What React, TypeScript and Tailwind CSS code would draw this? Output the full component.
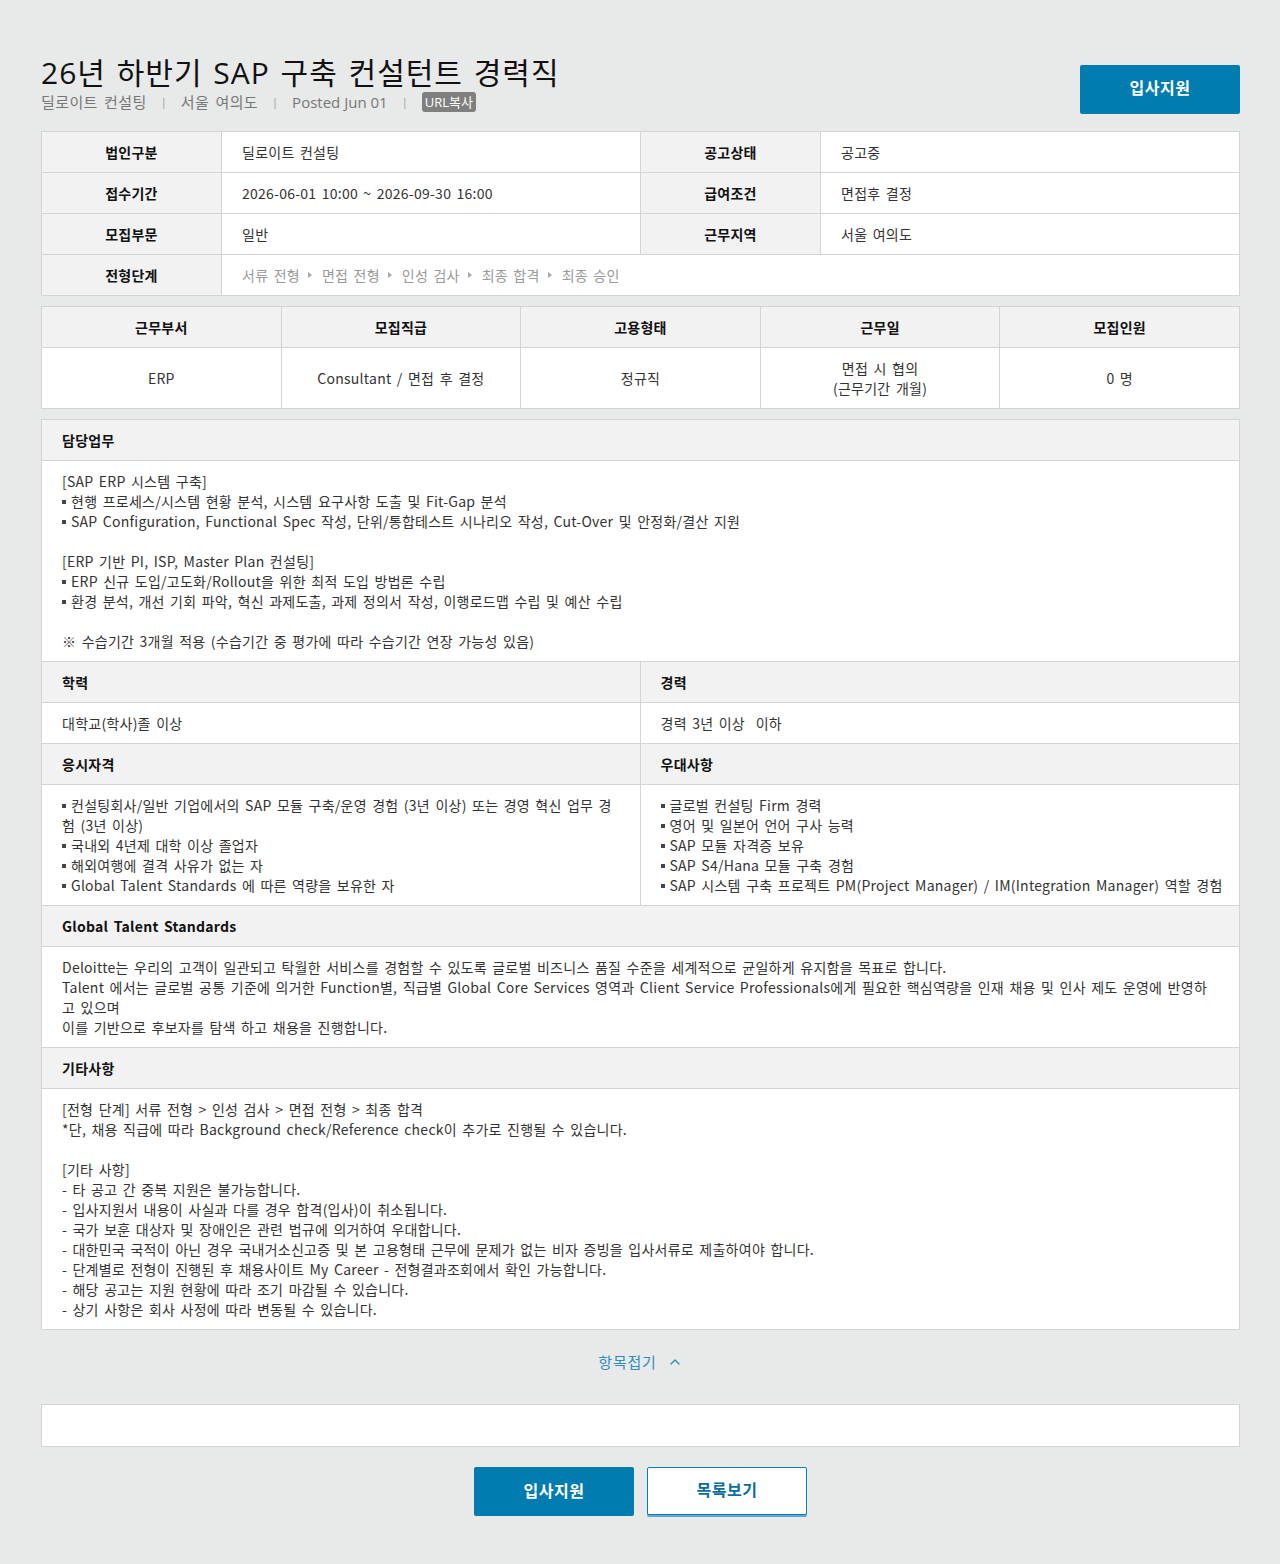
import React from 'react'
import { ChevronUp } from 'lucide-react'

const kr = "font-['Noto_Sans_CJK_KR','Noto_Sans',sans-serif]"
const head = "font-['Open_Sans','Noto_Sans_CJK_KR',sans-serif]"
const spread = 'tracking-[0.25px] [word-spacing:2px]'

const steps = ['서류 전형', '면접 전형', '인성 검사', '최종 합격', '최종 승인']

const duties = [
  '[SAP ERP 시스템 구축]',
  '• 현행 프로세스/시스템 현황 분석, 시스템 요구사항 도출 및 Fit-Gap 분석',
  '• SAP Configuration, Functional Spec 작성, 단위/통합테스트 시나리오 작성, Cut-Over 및 안정화/결산 지원',
  '',
  '[ERP 기반 PI, ISP, Master Plan 컨설팅]',
  '• ERP 신규 도입/고도화/Rollout을 위한 최적 도입 방법론 수립',
  '• 환경 분석, 개선 기회 파악, 혁신 과제도출, 과제 정의서 작성, 이행로드맵 수립 및 예산 수립',
  '',
  '※ 수습기간 3개월 적용 (수습기간 중 평가에 따라 수습기간 연장 가능성 있음)',
]

const qualifications = [
  '• 컨설팅회사/일반 기업에서의 SAP 모듈 구축/운영 경험 (3년 이상) 또는 경영 혁신 업무 경',
  '험 (3년 이상)',
  '• 국내외 4년제 대학 이상 졸업자',
  '• 해외여행에 결격 사유가 없는 자',
  '• Global Talent Standards 에 따른 역량을 보유한 자',
]

const preferred = [
  '• 글로벌 컨설팅 Firm 경력',
  '• 영어 및 일본어 언어 구사 능력',
  '• SAP 모듈 자격증 보유',
  '• SAP S4/Hana 모듈 구축 경험',
  '• SAP 시스템 구축 프로젝트 PM(Project Manager) / IM(Integration Manager) 역할 경험',
]

const standards = [
  'Deloitte는 우리의 고객이 일관되고 탁월한 서비스를 경험할 수 있도록 글로벌 비즈니스 품질 수준을 세계적으로 균일하게 유지함을 목표로 합니다.',
  'Talent 에서는 글로벌 공통 기준에 의거한 Function별, 직급별 Global Core Services 영역과 Client Service Professionals에게 필요한 핵심역량을 인재 채용 및 인사 제도 운영에 반영하',
  '고 있으며',
  '이를 기반으로 후보자를 탐색 하고 채용을 진행합니다.',
]

const etc = [
  '[전형 단계] 서류 전형 > 인성 검사 > 면접 전형 > 최종 합격',
  '*단, 채용 직급에 따라 Background check/Reference check이 추가로 진행될 수 있습니다.',
  '',
  '[기타 사항]',
  '- 타 공고 간 중복 지원은 불가능합니다.',
  '- 입사지원서 내용이 사실과 다를 경우 합격(입사)이 취소됩니다.',
  '- 국가 보훈 대상자 및 장애인은 관련 법규에 의거하여 우대합니다.',
  '- 대한민국 국적이 아닌 경우 국내거소신고증 및 본 고용형태 근무에 문제가 없는 비자 증빙을 입사서류로 제출하여야 합니다.',
  '- 단계별로 전형이 진행된 후 채용사이트 My Career - 전형결과조회에서 확인 가능합니다.',
  '- 해당 공고는 지원 현황에 따라 조기 마감될 수 있습니다.',
  '- 상기 사항은 회사 사정에 따라 변동될 수 있습니다.',
]

function Lines({ lines }: { lines: string[] }) {
  return (
    <div className={`px-5 py-[10px] text-sm leading-5 text-[#333] ${spread}`}>
      {lines.map((l, i) => (
        <div key={i} className="whitespace-pre">
          {l.startsWith('• ') ? (
            <>
              <span className="inline-block w-[4px] h-[4px] mr-[5px] bg-[#444] align-middle -translate-y-[1px]" />
              {l.slice(2)}
            </>
          ) : (
            l || '\u00a0'
          )}
        </div>
      ))}
    </div>
  )
}

function SectionHead({ children }: { children: React.ReactNode }) {
  return (
    <div className={`h-[41px] flex items-center px-5 bg-[#f2f2f2] border-b border-[#d4d4d4] text-sm font-bold text-[#111] ${spread}`}>
      {children}
    </div>
  )
}

function Label({ children }: { children: React.ReactNode }) {
  return (
    <td className={`w-[180px] h-[41px] border border-[#d4d4d4] bg-[#f2f2f2] text-center text-sm font-bold text-[#111] ${spread}`}>
      {children}
    </td>
  )
}

function Value({ children, colSpan }: { children: React.ReactNode; colSpan?: number }) {
  return (
    <td colSpan={colSpan} className={`h-[41px] border border-[#d4d4d4] bg-white px-5 text-sm text-[#333] ${spread}`}>
      {children}
    </td>
  )
}

export default function App() {
  return (
    <div className={`min-h-[1564px] bg-[#e8e9e9] ${kr}`}>
      <div className="w-[1199px] ml-[41px] pt-[54px] pb-[49px]">
        {/* Title */}
        <div className="flex justify-between items-start">
          <div>
            <h1 className={`text-[30px] leading-[38px] text-[#111] tracking-[1px] [word-spacing:2px] ${head}`}>
              26년 하반기 SAP 구축 컨설턴트 경력직
            </h1>
            <div className={`flex items-center text-[15px] text-[#777] leading-5 ${head}`}>
              <span className="tracking-[0.4px] [word-spacing:2px]">딜로이트 컨설팅</span>
              <span className="mx-[14px] text-[11px] text-[#999]">|</span>
              <span className="tracking-[0.4px] [word-spacing:2px]">서울 여의도</span>
              <span className="mx-[14px] text-[11px] text-[#999]">|</span>
              <span>Posted Jun 01</span>
              <span className="mx-[14px] text-[11px] text-[#999]">|</span>
              <span className="rounded-[3px] bg-[#7f7f7f] px-[3px] text-[13px] leading-[20px] text-white">URL복사</span>
            </div>
          </div>
          <button className="mt-[11px] w-[160px] h-[49px] pb-[5px] rounded-[2px] bg-[#007cb0] text-white text-base font-bold tracking-[0.5px]">
            입사지원
          </button>
        </div>

        {/* Summary */}
        <table className="mt-[17px] w-full border-collapse table-fixed">
          <colgroup>
            <col className="w-[180px]" />
            <col />
            <col className="w-[180px]" />
            <col />
          </colgroup>
          <tbody>
            <tr>
              <Label>법인구분</Label>
              <Value>딜로이트 컨설팅</Value>
              <Label>공고상태</Label>
              <Value>공고중</Value>
            </tr>
            <tr>
              <Label>접수기간</Label>
              <Value>2026-06-01 10:00 ~ 2026-09-30 16:00</Value>
              <Label>급여조건</Label>
              <Value>면접후 결정</Value>
            </tr>
            <tr>
              <Label>모집부문</Label>
              <Value>일반</Value>
              <Label>근무지역</Label>
              <Value>서울 여의도</Value>
            </tr>
            <tr>
              <Label>전형단계</Label>
              <Value colSpan={3}>
                <div className="flex items-center text-[#999]">
                  {steps.map((s, i) => (
                    <React.Fragment key={s}>
                      <span>{s}</span>
                      {i < steps.length - 1 && (
                        <span className="ml-[8px] mr-[10px] w-0 h-0 border-l-[4px] border-l-[#aaa] border-y-[3px] border-y-transparent" />
                      )}
                    </React.Fragment>
                  ))}
                </div>
              </Value>
            </tr>
          </tbody>
        </table>

        {/* Position */}
        <table className={`mt-[10px] w-full border-collapse table-fixed text-sm ${spread}`}>
          <thead>
            <tr className="bg-[#f2f2f2] text-[#111]">
              {['근무부서', '모집직급', '고용형태', '근무일', '모집인원'].map(h => (
                <th key={h} className="h-[41px] border border-[#d4d4d4] font-bold">{h}</th>
              ))}
            </tr>
          </thead>
          <tbody>
            <tr className="bg-white text-center text-[#333] leading-5">
              <td className="h-[61px] border border-[#d4d4d4]">ERP</td>
              <td className="border border-[#d4d4d4]">Consultant / 면접 후 결정</td>
              <td className="border border-[#d4d4d4]">정규직</td>
              <td className="border border-[#d4d4d4]">
                면접 시 협의
                <br />
                (근무기간 개월)
              </td>
              <td className="border border-[#d4d4d4]">0 명</td>
            </tr>
          </tbody>
        </table>

        {/* Details */}
        <div className="mt-[10px] border border-[#d4d4d4] bg-white">
          <SectionHead>담당업무</SectionHead>
          <div className="border-b border-[#d4d4d4]">
            <Lines lines={duties} />
          </div>

          <div className="grid grid-cols-2 border-b border-[#d4d4d4]">
            <div className="border-r border-[#d4d4d4]">
              <SectionHead>학력</SectionHead>
              <Lines lines={['대학교(학사)졸 이상']} />
            </div>
            <div>
              <SectionHead>경력</SectionHead>
              <Lines lines={['경력 3년 이상  이하']} />
            </div>
          </div>

          <div className="grid grid-cols-2 border-b border-[#d4d4d4]">
            <div className="border-r border-[#d4d4d4]">
              <SectionHead>응시자격</SectionHead>
              <Lines lines={qualifications} />
            </div>
            <div>
              <SectionHead>우대사항</SectionHead>
              <Lines lines={preferred} />
            </div>
          </div>

          <SectionHead>Global Talent Standards</SectionHead>
          <div className="border-b border-[#d4d4d4]">
            <Lines lines={standards} />
          </div>

          <SectionHead>기타사항</SectionHead>
          <Lines lines={etc} />
        </div>

        {/* Collapse */}
        <div className="mt-[22px] flex justify-center">
          <button className="flex items-center gap-[10px] text-[15px] leading-5 text-[#2f8cc0] tracking-[0.8px]">
            항목접기
            <ChevronUp className="w-4 h-4" strokeWidth={2} />
          </button>
        </div>

        <div className="mt-[32px] h-[43px] border border-[#d4d4d4] bg-white" />

        {/* Actions */}
        <div className="mt-[20px] flex justify-center gap-[13px]">
          <button className="w-[160px] h-[49px] pb-[4px] rounded-[2px] bg-[#007cb0] text-white text-base font-bold tracking-[0.5px]">
            입사지원
          </button>
          <button className="w-[160px] h-[48px] pb-[4px] rounded-[2px] border border-[#0a7cb1] bg-white text-base font-bold text-[#0a6e9c] tracking-[0.5px] shadow-[0_2px_0_#5aa7d4]">
            목록보기
          </button>
        </div>
      </div>
    </div>
  )
}
